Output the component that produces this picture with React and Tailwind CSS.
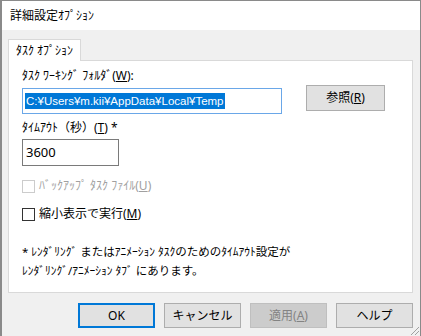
import React from "react";

const font = { fontFamily: '"Noto Sans", "Noto Sans CJK JP", sans-serif' };

function Btn({ children, primary, disabled }) {
  const base = "w-[77px] h-[25px] flex items-center justify-center text-[12px] border";
  if (disabled) return <div className={`${base} bg-[#cccccc] border-[#bfbfbf] text-[#838383]`}>{children}</div>;
  if (primary) return <div className={`${base} bg-[#e1e1e1] border-[#0078d7] border-2 text-black`}>{children}</div>;
  return <div className={`${base} bg-[#e1e1e1] border-[#adadad] text-black`}>{children}</div>;
}

function Check({ disabled, children }) {
  return (
    <div className="flex items-center h-[16px] gap-[4px]">
      <div className={`w-[13px] h-[13px] border bg-white ${disabled ? "border-[#cccccc]" : "border-[#333333]"}`} />
      <span className={disabled ? "text-[#a0a0a0]" : "text-black"}>{children}</span>
    </div>
  );
}

export default function App() {
  return (
    <div style={font} className="relative w-[421px] h-[336px] bg-[#f0f0f0] border-t border-l-2 border-r border-[#8a8a8a] flex flex-col text-[12px] text-black overflow-hidden">
      {/* title bar */}
      <div className="h-[29px] bg-white flex items-center pl-[8px] text-[12px] leading-none">詳細設定ｵﾌﾟｼｮﾝ</div>

      <div className="pt-[9px] pl-[6px] pr-[7px]">
        {/* tab */}
        <div className="relative z-10 -mb-px w-[73px] h-[22px] bg-white border border-b-0 border-[#d9d9d9] flex items-center justify-center">
          ﾀｽｸ ｵﾌﾟｼｮﾝ
        </div>
        {/* panel */}
        <div className="h-[233px] bg-white border border-[#d9d9d9] pl-[13px] pt-[7px]">
          <div className="h-[16px] leading-[16px]">
            ﾀｽｸ ﾜｰｷﾝｸﾞ ﾌｫﾙﾀﾞ(<span className="underline">W</span>):
          </div>
          <div className="flex items-start mt-[1px]">
            <div className="mt-[3px] w-[260px] h-[26px] border border-[#6aa7e8] bg-white flex items-center pl-[2px]">
              <span className="bg-[#0078d7] text-white text-[11.5px] leading-[16px] px-px font-['Liberation_Sans','Noto_Sans',sans-serif]">C:¥Users¥m.kii¥AppData¥Local¥Temp</span>
            </div>
            <div className="ml-[24px] w-[79px] h-[26px] bg-[#e1e1e1] border border-[#adadad] flex items-center justify-center">
              参照(<span className="underline">R</span>)
            </div>
          </div>
          <div className="mt-[6px] h-[16px] leading-[16px]">
            ﾀｲﾑｱｳﾄ（秒）(<span className="underline">T</span>) *
          </div>
          <div className="mt-[3px] w-[97px] h-[27px] border border-[#7a7a7a] bg-white flex items-center pl-[3px] text-[13px]">
            3600
          </div>
          <div className="mt-[12px]">
            <Check disabled>ﾊﾞｯｸｱｯﾌﾟ ﾀｽｸ ﾌｧｲﾙ(<span className="underline">U</span>)</Check>
          </div>
          <div className="mt-[12px]">
            <Check>縮小表示で実行(<span className="underline">M</span>)</Check>
          </div>
          <div className="mt-[20px] leading-[19px] text-[11.5px]">
            <div>* ﾚﾝﾀﾞﾘﾝｸﾞ またはｱﾆﾒｰｼｮﾝ ﾀｽｸのためのﾀｲﾑｱｳﾄ設定が</div>
            <div>ﾚﾝﾀﾞﾘﾝｸﾞ/ｱﾆﾒｰｼｮﾝ ﾀﾌﾞ にあります。</div>
          </div>
        </div>

        {/* buttons */}
        <div className="mt-[10px] flex justify-end gap-[9px]">
          <Btn primary>OK</Btn>
          <Btn>キャンセル</Btn>
          <Btn disabled>適用(<span className="underline">A</span>)</Btn>
          <Btn>ヘルプ</Btn>
        </div>
      </div>

      {/* resize grip */}
      <svg className="absolute right-0 bottom-0" width="12" height="12" viewBox="0 0 12 12">
        <path d="M11 3 L3 11 M11 7 L7 11 M11 11 L11 11" stroke="#a0a0a0" strokeWidth="1" />
      </svg>
    </div>
  );
}
